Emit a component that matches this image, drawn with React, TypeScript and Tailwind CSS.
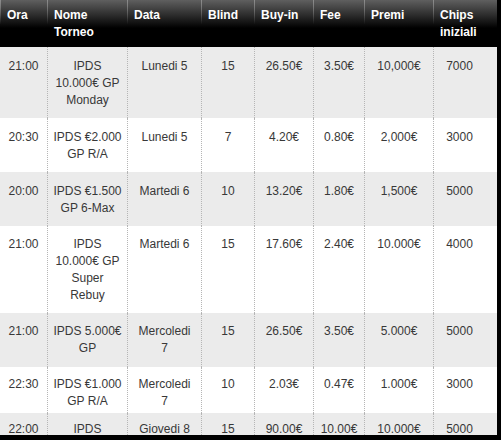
import React from "react";

const cols = "grid grid-cols-[47px_80px_74px_53px_59px_51px_69px_64px]";

const headers = [["Ora"], ["Nome", "Torneo"], ["Data"], ["Blind"], ["Buy-in"], ["Fee"], ["Premi"], ["Chips", "iniziali"]];

type Row = {
  cells: string[][];
  bg: string;
  h: string;
  pt: string;
};

const rows: Row[] = [
  {
    cells: [["21:00"], ["IPDS", "10.000€ GP", "Monday"], ["Lunedi 5"], ["15"], ["26.50€"], ["3.50€"], ["10,000€"], ["7000"]],
    bg: "bg-[#ebebeb]",
    h: "h-[71px]",
    pt: "pt-[11px]",
  },
  {
    cells: [["20:30"], ["IPDS €2.000", "GP R/A"], ["Lunedi 5"], ["7"], ["4.20€"], ["0.80€"], ["2,000€"], ["3000"]],
    bg: "bg-white",
    h: "h-[54px]",
    pt: "pt-[11px]",
  },
  {
    cells: [["20:00"], ["IPDS €1.500", "GP 6-Max"], ["Martedi 6"], ["10"], ["13.20€"], ["1.80€"], ["1,500€"], ["5000"]],
    bg: "bg-[#ebebeb]",
    h: "h-[54px]",
    pt: "pt-[11px]",
  },
  {
    cells: [["21:00"], ["IPDS", "10.000€ GP", "Super", "Rebuy"], ["Martedi 6"], ["15"], ["17.60€"], ["2.40€"], ["10.000€"], ["4000"]],
    bg: "bg-white",
    h: "h-[87px]",
    pt: "pt-[10px]",
  },
  {
    cells: [["21:00"], ["IPDS 5.000€", "GP"], ["Mercoledi", "7"], ["15"], ["26.50€"], ["3.50€"], ["5.000€"], ["5000"]],
    bg: "bg-[#ebebeb]",
    h: "h-[54px]",
    pt: "pt-[10px]",
  },
  {
    cells: [["22:30"], ["IPDS €1.000", "GP R/A"], ["Mercoledi", "7"], ["10"], ["2.03€"], ["0.47€"], ["1.000€"], ["3000"]],
    bg: "bg-white",
    h: "h-[46px]",
    pt: "pt-[9px]",
  },
  {
    // ultima riga tagliata dal bordo inferiore
    cells: [["22:00"], ["IPDS"], ["Giovedi 8"], ["15"], ["90.00€"], ["10.00€"], ["10.000€"], ["5000"]],
    bg: "bg-[#ebebeb]",
    h: "h-[60px]",
    pt: "pt-[8px]",
  },
];

export default function App() {
  return (
    <main className="w-[501px] h-[440px] bg-black overflow-hidden font-['Liberation_Sans',Arial,sans-serif]">
      <div className="w-[497px] h-[435px] overflow-hidden bg-white">
        {/* intestazione */}
        <div className={`${cols} h-[47px] bg-[linear-gradient(to_bottom,#5f5f5f,#000_60%)]`}>
          {headers.map((lines, i) => (
            <div
              key={i}
              className="pl-[7px] pt-[7px] text-[12px] leading-[17px] font-bold text-white bg-[linear-gradient(to_bottom,#8c8c8c,rgba(140,140,140,0)_52%)] bg-no-repeat bg-[length:1px_100%]"
            >
              {lines.map((l) => (
                <div key={l}>{l}</div>
              ))}
            </div>
          ))}
        </div>

        {/* righe tornei */}
        {rows.map((row, r) => (
          <div key={r} className={`${cols} ${row.bg} ${row.h}`}>
            {row.cells.map((lines, i) => (
              <div
                key={i}
                className={`${row.pt} text-center text-[12px] leading-[17px] text-[#383838] ${
                  i > 0 ? "border-l border-dotted border-[#b5b5b5]" : ""
                } ${i === 7 ? "pr-[12px]" : ""}`}
              >
                {lines.map((l) => (
                  <div key={l}>{l}</div>
                ))}
              </div>
            ))}
          </div>
        ))}
      </div>
    </main>
  );
}
